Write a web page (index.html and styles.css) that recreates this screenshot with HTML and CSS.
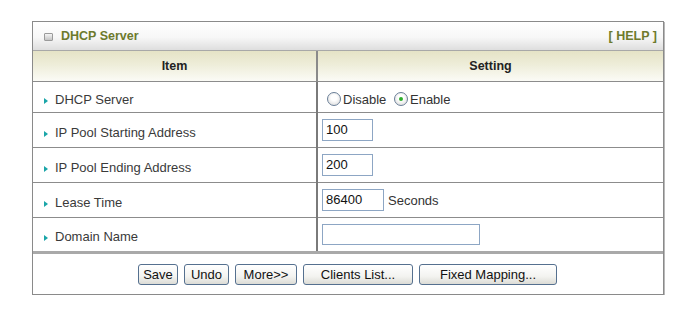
FILE: index.html
```html
<!DOCTYPE html>
<html>
<head>
<meta charset="utf-8">
<link rel="stylesheet" href="styles.css">
</head>
<body>
<div class="panel">
  <div class="titlebar">
    <span class="ticon"></span>
    <span class="ttext">DHCP Server</span>
    <span class="help">[ HELP ]</span>
  </div>
  <table class="grid">
    <colgroup><col class="col1"><col class="col2"></colgroup>
    <tr class="head">
      <th class="c1">Item</th>
      <th class="c2">Setting</th>
    </tr>
    <tr class="r1">
      <td class="c1"><span class="bul"></span>DHCP Server</td>
      <td class="c2 radios">
        <span class="radio"></span><span class="rl">Disable</span>
        <span class="radio on"></span><span class="rl">Enable</span>
      </td>
    </tr>
    <tr class="r2">
      <td class="c1"><span class="bul"></span>IP Pool Starting Address</td>
      <td class="c2"><span class="inp short">100</span></td>
    </tr>
    <tr class="r3">
      <td class="c1"><span class="bul"></span>IP Pool Ending Address</td>
      <td class="c2"><span class="inp short">200</span></td>
    </tr>
    <tr class="r4">
      <td class="c1"><span class="bul"></span>Lease Time</td>
      <td class="c2"><span class="inp mid">86400</span><span class="unit">Seconds</span></td>
    </tr>
    <tr class="r5">
      <td class="c1"><span class="bul"></span>Domain Name</td>
      <td class="c2"><span class="inp long"></span></td>
    </tr>
  </table>
  <div class="btnrow">
    <button class="btn b-save">Save</button>
    <button class="btn b-undo">Undo</button>
    <button class="btn b-more">More&gt;&gt;</button>
    <button class="btn b-cl">Clients List...</button>
    <button class="btn b-fm">Fixed Mapping...</button>
  </div>
</div>
</body>
</html>
```

FILE: styles.css
```css
html, body {
  margin: 0;
  padding: 0;
  background: #fff;
}
body {
  padding: 21px 0 0 32px;
  font-family: "Liberation Sans", Arial, sans-serif;
  font-size: 13px;
  color: #333;
}
.panel {
  width: 630px;
  border: 1px solid #8a8a8a;
  box-shadow: 1px 1px 0 #b8b8b8;
  background: #fff;
}
.titlebar {
  height: 28px;
  display: flex;
  align-items: center;
  background: linear-gradient(#ffffff 0%, #f7f7f7 55%, #dedede 100%);
  border-bottom: 1px solid #a8a8a8;
  padding: 0 6px 0 11px;
}
.ticon {
  width: 7px;
  height: 6px;
  border: 1px solid #9a9a9a;
  background: linear-gradient(#f4f4f4, #c4c4c4);
  border-radius: 1px;
  margin-right: 8px;
  margin-top: 1px;
}
.ttext, .help {
  font-weight: bold;
  color: #6d7a2c;
  font-size: 12.5px;
}
.help {
  margin-left: auto;
}
.grid {
  width: 100%;
  border-collapse: collapse;
  table-layout: fixed;
}
.col1 { width: 284px; }
.grid th, .grid td {
  padding: 0;
  border-bottom: 1px solid #8c8c8c;
}
.grid .c1 {
  border-right: 2px solid #7a7a7a;
}
.head th {
  height: 30px;
  font-weight: bold;
  color: #222;
  font-size: 12.5px;
  background: linear-gradient(#e5e3c6 0%, #eeedd9 45%, #fbfbf6 100%);
}
.head .c1 { border-right-color: #8a8a8a; }
.r1 td { height: 26px; }
.r2 td { height: 30px; }
.r3 td { height: 30px; }
.r4 td { height: 30px; }
.r5 td { height: 29px; border-bottom: 3px solid #a9a9a9; }
.grid td.c1 {
  padding: 4px 0 0 11px;
  color: #3a3a3a;
  white-space: nowrap;
}
.bul {
  display: inline-block;
  width: 0;
  height: 0;
  border-left: 4px solid #1aa5a8;
  border-top: 3.5px solid transparent;
  border-bottom: 3.5px solid transparent;
  margin-right: 7px;
  vertical-align: 0px;
}
.grid td.c2 {
  padding-left: 4px;
}
.grid td.radios {
  color: #333;
  padding-top: 4px;
}
.radio {
  display: inline-block;
  width: 12px;
  height: 12px;
  border: 1px solid #6a7f98;
  border-radius: 50%;
  background: radial-gradient(circle at 50% 40%, #ffffff 30%, #d4d4d4 100%);
  vertical-align: -2px;
  margin: 0 2px 0 5px;
  position: relative;
}
.radio.on::after {
  content: "";
  position: absolute;
  left: 4px;
  top: 4px;
  width: 4px;
  height: 4px;
  border-radius: 50%;
  background: #2dae2d;
}
.rl { margin-right: -1px; }
.inp {
  display: inline-block;
  box-sizing: border-box;
  height: 22px;
  border: 1px solid #8da6c4;
  background: #fff;
  line-height: 20px;
  padding-left: 3px;
  color: #111;
  vertical-align: middle;
  font-size: 13px;
}
.short { width: 51px; }
.mid { width: 62px; }
.long { width: 158px; height: 21px; }
.unit {
  margin-left: 4px;
  vertical-align: middle;
  color: #333;
}
.btnrow {
  height: 40px;
  display: flex;
  align-items: center;
  padding-left: 105px;
  gap: 6px;
}
.btn {
  box-sizing: border-box;
  height: 21px;
  font-family: "Liberation Sans", Arial, sans-serif;
  font-size: 13px;
  color: #111;
  border: 1px solid #55708f;
  border-radius: 3px;
  background: linear-gradient(#ffffff 0%, #f3f3f0 60%, #dcdcd6 100%);
  padding: 0;
  margin: 0;
}
.b-save { width: 40px; }
.b-undo { width: 45px; }
.b-more { width: 62px; }
.b-cl { width: 110px; }
.b-fm { width: 138px; }
```
